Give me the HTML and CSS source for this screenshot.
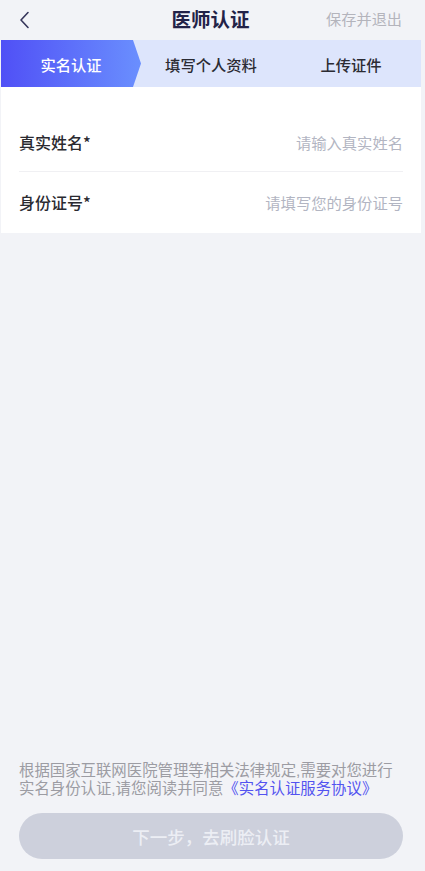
FILE: index.html
```html
<!DOCTYPE html>
<html lang="zh-CN">
<head>
<meta charset="utf-8">
<title>医师认证</title>
<link rel="stylesheet" href="styles.css">
</head>
<body>
<div class="app">
  <header class="topbar">
    <div class="back">
      <svg width="11" height="18" viewBox="0 0 11 18"><path d="M9 1.5 L2 9 L9 16.5" fill="none" stroke="#35355a" stroke-width="1.6" stroke-linecap="round" stroke-linejoin="round"/></svg>
    </div>
    <div class="title">医师认证</div>
    <div class="save">保存并退出</div>
  </header>
  <nav class="steps">
    <div class="step active">实名认证</div>
    <div class="step">填写个人资料</div>
    <div class="step">上传证件</div>
  </nav>
  <section class="card">
    <div class="row">
      <span class="label">真实姓名*</span>
      <span class="placeholder">请输入真实姓名</span>
    </div>
    <div class="row">
      <span class="label">身份证号*</span>
      <span class="placeholder">请填写您的身份证号</span>
    </div>
  </section>
  <div class="spacer"></div>
  <footer class="footer">
    <div class="notice">
      <div class="line">根据国家互联网医院管理等相关法律规定,需要对您进行</div>
      <div class="line"><span>实名身份认证,请您阅读并同意</span><span class="link">《实名认证服务协议》</span></div>
    </div>
    <button class="next">下一步，去刷脸认证</button>
  </footer>
</div>
</body>
</html>
```

FILE: styles.css
```css
html, body {
  margin: 0;
  padding: 0;
  background: #f2f3f7;
}
body {
  font-family: "Noto Sans CJK SC", "Noto Sans", sans-serif;
  width: 425px;
  height: 871px;
  overflow: hidden;
}
.app {
  width: 420px;
  margin-left: 1px;
  height: 871px;
  display: flex;
  flex-direction: column;
}
.topbar {
  height: 40px;
  display: grid;
  grid-template-columns: 1fr auto 1fr;
  align-items: center;
  padding: 0 19px;
  margin-left: -1px;
}
.back {
  display: flex;
  align-items: center;
  height: 18px;
}
.back svg { display: block; }
.title {
  font-size: 19.5px;
  font-weight: 700;
  color: #222248;
  line-height: 1;
  margin-top: -2px;
}
.save {
  justify-self: end;
  font-size: 15.2px;
  color: #b4b4bc;
  line-height: 1;
  margin-top: -2px;
}
.steps {
  height: 47px;
  display: grid;
  grid-template-columns: 1fr 1fr 1fr;
  background: #dde5fc;
}
.step {
  display: flex;
  align-items: center;
  justify-content: center;
  font-size: 15.3px;
  font-weight: 500;
  color: #2b2b33;
}
.step.active {
  color: #fff;
  background: linear-gradient(90deg, #5050f6 0%, #6a8ffe 100%);
  clip-path: polygon(0 0, calc(100% - 8px) 0, 100% 50%, calc(100% - 8px) 100%, 0 100%);
}
.card {
  background: #fff;
  padding: 25px 0 2px;
}
.row {
  margin: 0 18px;
  height: 59px;
  display: flex;
  align-items: center;
  justify-content: space-between;
}
.row + .row {
  border-top: 1px solid #f0f0f3;
}
.label {
  font-size: 16px;
  font-weight: 500;
  color: #2a2a30;
}
.placeholder {
  font-size: 15.3px;
  color: #b2b5c2;
}
.spacer { flex: 1; }
.footer {
  padding: 0 18px 12px;
}
.notice {
  margin: 0 0 15px;
  font-family: "Liberation Sans", "Noto Sans CJK SC", sans-serif;
  font-size: 15.4px;
  line-height: 18px;
  color: #9c9ca3;
}
.line {
  height: 18px;
  white-space: nowrap;
}
.link {
  color: #5353f0;
}
.next {
  display: block;
  width: 100%;
  height: 46px;
  border: 0;
  border-radius: 23px;
  background: #cdd0dc;
  color: #eceef4;
  font-family: inherit;
  font-size: 17.5px;
  font-weight: 500;
  padding: 0;
}
```
